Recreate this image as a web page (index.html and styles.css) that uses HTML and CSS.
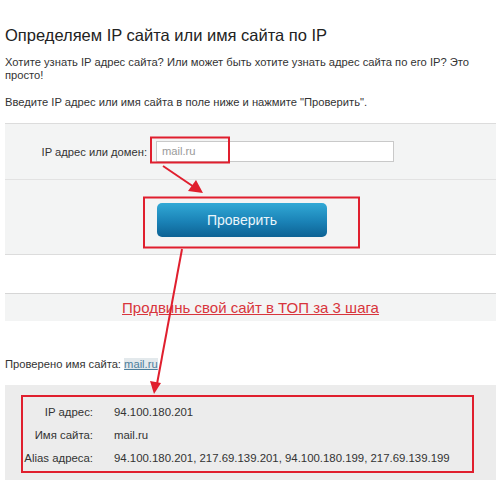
FILE: index.html
```html
<!DOCTYPE html>
<html lang="ru">
<head>
<meta charset="utf-8">
<link rel="stylesheet" href="styles.css">
</head>
<body>
<div class="page">
  <h1 class="title">Определяем IP сайта или имя сайта по IP</h1>
  <p class="text text-first">Хотите узнать IP адрес сайта? Или может быть хотите узнать адрес сайта по его IP? Это просто!</p>
  <p class="text text-second">Введите IP адрес или имя сайта в поле ниже и нажмите "Проверить".</p>

  <div class="form-box">
    <div class="form-row">
      <label class="form-label">IP адрес или домен:</label>
      <div class="form-input">mail.ru</div>
    </div>
    <div class="button-row">
      <div class="check-button">Проверить</div>
    </div>
  </div>

  <div class="promo-box">
    <a class="promo-link">Продвинь свой сайт в ТОП за 3 шага</a>
  </div>

  <p class="checked">Проверено имя сайта: <a class="checked-link">mail.ru</a></p>

  <div class="result-box">
    <div class="result-frame">
      <div class="result-row"><span class="result-label">IP адрес:</span><span class="result-value">94.100.180.201</span></div>
      <div class="result-row"><span class="result-label">Имя сайта:</span><span class="result-value">mail.ru</span></div>
      <div class="result-row"><span class="result-label">Alias адреса:</span><span class="result-value">94.100.180.201, 217.69.139.201, 94.100.180.199, 217.69.139.199</span></div>
    </div>
  </div>
</div>

<svg class="annotations" width="500" height="480" viewBox="0 0 500 480">
  <rect x="151" y="137.5" width="78" height="25" fill="none" stroke="#e01f2e" stroke-width="2"/>
  <rect x="144" y="197.5" width="215" height="50" fill="none" stroke="#e01f2e" stroke-width="2"/>
  <line x1="163" y1="166" x2="194" y2="187" stroke="#e01f2e" stroke-width="2"/>
  <polygon points="203,193 188,191 196,180" fill="#e01f2e"/>
  <line x1="182" y1="249" x2="157" y2="384" stroke="#e01f2e" stroke-width="2"/>
  <polygon points="154,394 150,381 161,383" fill="#e01f2e"/>
</svg>
</body>
</html>
```

FILE: styles.css
```css
html, body {
  margin: 0;
  padding: 0;
  background: #ffffff;
}

body {
  font-family: "Liberation Sans", Arial, sans-serif;
  color: #333333;
  width: 500px;
  height: 480px;
  overflow: hidden;
  position: relative;
}

.page {
  padding: 0 4px 0 5px;
}

.title {
  margin: 0;
  padding-top: 25px;
  font-size: 16.5px;
  line-height: 20px;
  font-weight: normal;
  color: #222222;
}

.text {
  margin: 0;
  font-size: 11.2px;
  line-height: 13px;
}

.text-first {
  margin-top: 11px;
}

.text-second {
  margin-top: 14px;
}

.form-box {
  margin-top: 14px;
  background: #f3f4f4;
  border-top: 1px solid #dcdcdc;
  border-bottom: 1px solid #dcdcdc;
}

.form-row {
  height: 55px;
  display: flex;
  align-items: center;
  border-bottom: 1px solid #e2e2e2;
}

.form-label {
  width: 142px;
  text-align: right;
  font-size: 11.2px;
  color: #333333;
}

.form-input {
  margin-left: 9px;
  width: 231px;
  height: 19px;
  padding-left: 5px;
  background: #ffffff;
  border: 1px solid #c9c9c9;
  font-size: 11.2px;
  line-height: 19px;
  color: #9a9a9a;
}

.button-row {
  height: 74px;
  padding-top: 23px;
  box-sizing: border-box;
  padding-left: 152px;
}

.check-button {
  width: 170px;
  height: 34px;
  border-radius: 5px;
  background: linear-gradient(#31a9d6, #1a82b6 55%, #0d6294);
  color: #eaf6fb;
  font-size: 14px;
  line-height: 34px;
  text-align: center;
}

.promo-box {
  margin-top: 38px;
  height: 27px;
  background: #f3f4f4;
  border-top: 1px solid #d6d6d6;
  display: flex;
  align-items: center;
  justify-content: center;
}

.promo-link {
  font-size: 15px;
  color: #d8353c;
  text-decoration: underline;
}

.checked {
  margin: 37px 0 0 0;
  font-size: 11.2px;
  line-height: 13px;
}

.checked-link {
  color: #4d7f9c;
  text-decoration: underline;
  background: #e3e9ec;
}

.result-box {
  margin-top: 14px;
  background: #ececec;
  padding: 10px 22px 20px 16px;
}

.result-frame {
  border: 2px solid #e01f2e;
  padding: 3px 0 2px 0;
}

.result-row {
  display: flex;
  height: 23px;
  align-items: center;
  font-size: 11.4px;
}

.result-label {
  width: 70px;
  text-align: right;
  white-space: nowrap;
  color: #333333;
}

.result-value {
  margin-left: 21px;
  white-space: nowrap;
  color: #333333;
}

.annotations {
  position: absolute;
  left: 0;
  top: 0;
  pointer-events: none;
}
```
